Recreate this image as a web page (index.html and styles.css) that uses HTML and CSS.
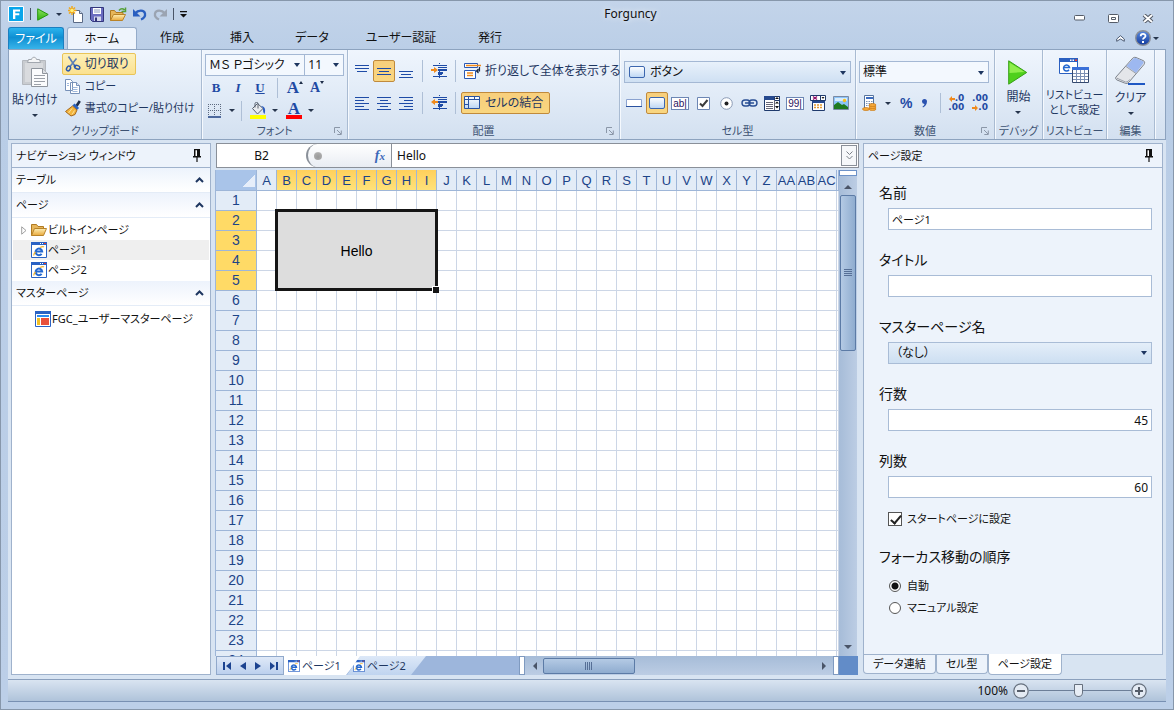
FILE: index.html
```html
<!DOCTYPE html>
<html lang="ja">
<head>
<meta charset="utf-8">
<title>Forguncy</title>
<link rel="stylesheet" href="styles.css">
</head>
<body>
<svg class="defs" aria-hidden="true">
  <defs>
    <linearGradient id="gGreen" x1="0" y1="0" x2="0" y2="1"><stop offset="0" stop-color="#8be060"/><stop offset="1" stop-color="#2fb40c"/></linearGradient>
    <linearGradient id="gFolder" x1="0" y1="0" x2="0" y2="1"><stop offset="0" stop-color="#fdeeb4"/><stop offset="1" stop-color="#e9a93c"/></linearGradient>
    <linearGradient id="gBtn" x1="0" y1="0" x2="0" y2="1"><stop offset="0" stop-color="#fff"/><stop offset="1" stop-color="#bcd6f4"/></linearGradient>
    <linearGradient id="gHelp" x1="0" y1="0" x2="0" y2="1"><stop offset="0" stop-color="#5a8ae0"/><stop offset="1" stop-color="#123a9c"/></linearGradient>
    <symbol id="page" viewBox="0 0 16 16"><path fill="#fff" stroke="#2a62c4" d="M.5.5h15v15H.5z"/><path fill="#2a62c4" d="M0 0h16v3H0z"/><path fill="#fff" d="M9 1h1v1H9zM11 1h1v1h-1z"/><path fill="#f03c28" d="M13 1h2v1h-2z"/><path d="M4.800 9.500h6.400A3.300 3.300 0 1 0 10.600 11.800" fill="none" stroke="#2468d0" stroke-width="2"/><path d="M3 13.500C2.500 12.500 3.500 11 4.500 10M9 5.500c2-1 3.500-1 4-.5" fill="none" stroke="#f3b32c" stroke-width="1.200"/></symbol>
    <symbol id="pin" viewBox="0 0 8 13"><path fill="#111" d="M1 0h6v7h1v1.500H4.600V13H3.400V8.500H0V7h1z"/><path fill="#fff" d="M2.500 1.200H4V7H2.500z"/></symbol>
    <symbol id="up" viewBox="0 0 9 6"><path d="M1 5l3.500-3.500L8 5" fill="none" stroke="#1e3660" stroke-width="2"/></symbol>
    <symbol id="launch" viewBox="0 0 8 8"><path d="M.5 6V.5H6M3 3l4 4M7.300 3.500v4h-4" fill="none" stroke="#8b97a8"/></symbol>
    <symbol id="folder" viewBox="0 0 16 14"><path fill="#e7b65a" stroke="#b07a20" d="M.5 12.500V1.500h5l1.500 2h5.500v3"/><path fill="url(#gFolder)" stroke="#b98328" d="M.5 12.500l3-7h12l-3 7z"/></symbol>
    <symbol id="btncell" viewBox="0 0 16 12"><rect x=".5" y=".5" width="15" height="11" rx="1.500" fill="url(#gBtn)" stroke="#3c66ae"/></symbol>
  </defs>
</svg>

<div class="window">
  <header class="titlebar">
    <div class="quick">
      <svg width="16" height="16" viewBox="0 0 16 16"><path fill="#09a5ea" stroke="#fff" d="M.5.5h15v15H.5z"/><path fill="#fff" d="M5 3.500h7v2H7.300v1.800h4v2h-4v3.700H5z"/></svg>
      <i class="vbar"></i>
      <button class="ic" aria-label="実行"><svg width="12" height="13" viewBox="0 0 12 13"><path fill="url(#gGreen)" stroke="#25960c" d="M.7.800l10.500 5.700L.7 12.200z"/></svg></button>
      <button class="ic drop" aria-label="実行オプション"></button>
      <button class="ic" aria-label="新規"><svg width="16" height="17" viewBox="0 0 16 17"><path fill="#fff" stroke="#5a6a86" d="M5.500 4.500h6l3 3v9h-9z"/><path fill="#cdd8ea" stroke="#5a6a86" d="M11.500 4.500v3h3"/><g stroke="#f0a81c" stroke-width="1.500"><path d="M4 0v9M-.5 4.500h9M1 1.500l6 6M7 1.500l-6 6"/></g><circle cx="4" cy="4.500" r="1.800" fill="#fff07a"/></svg></button>
      <button class="ic" aria-label="保存"><svg width="14" height="15" viewBox="0 0 14 15"><path fill="#6a6cc0" stroke="#33367c" d="M.5.500h13v14h-11l-2-2z"/><path fill="#fff" d="M3 1h8v6H3z"/><path stroke="#8c9cc4" d="M4 3h6M4 5h6"/><path fill="#d4d8ec" d="M4 9.500h7V14H4z"/><path fill="#33367c" d="M5 10.500h2V14H5z"/></svg></button>
      <button class="ic" aria-label="開く"><svg width="17" height="15" viewBox="0 0 17 15"><path fill="#e7b65a" stroke="#b07a20" d="M.5 13.500v-10h4l1.500 2h7v3"/><path fill="url(#gFolder)" stroke="#b98328" d="M.5 13.500l3-6h12l-3 6z"/><path d="M9 3.500c2-2.500 4-2 5.500-.5M15.500 .500v4h-4" fill="none" stroke="#56a038" stroke-width="1.500"/></svg></button>
      <button class="ic" aria-label="元に戻す"><svg width="14" height="13" viewBox="0 0 14 13"><path d="M2 5.500C5 2 11 1.500 12 5.500c.5 3-1.500 5-4 6" fill="none" stroke="#2a5fc0" stroke-width="2.300"/><path fill="#2a5fc0" d="M0 1v7.500h7.500z"/></svg></button>
      <button class="ic" aria-label="やり直し"><svg width="14" height="13" viewBox="0 0 14 13"><path d="M12 5.500C9 2 3 1.500 2 5.500c-.5 3 1.500 5 4 6" fill="none" stroke="#9ba4b2" stroke-width="2.300"/><path fill="#9ba4b2" d="M14 1v7.500H6.500z"/></svg></button>
      <i class="vbar"></i>
      <button class="ic" aria-label="カスタマイズ"><svg width="7" height="7" viewBox="0 0 7 7"><path d="M0 0h7v1.200H0zM0 3h7L3.500 6.500z" fill="#111"/></svg></button>
    </div>
    <h1 class="title">Forguncy</h1>
    <div class="sysbtns">
      <button class="ic" aria-label="最小化"><svg width="11" height="6" viewBox="0 0 11 6"><rect x=".5" y=".5" width="10" height="4.500" rx="1" fill="#fff" stroke="#555c68"/></svg></button>
      <button class="ic" aria-label="元のサイズに戻す"><svg width="11" height="9" viewBox="0 0 11 9"><rect x=".5" y=".5" width="10" height="8" rx="1" fill="#fff" stroke="#555c68"/><path fill="#fff" stroke="#555c68" d="M3.500 3.500h4v2h-4z"/></svg></button>
      <button class="ic" aria-label="閉じる"><svg width="12" height="9" viewBox="0 0 12 9"><path d="M2 1l8 7M10 1L2 8" stroke="#555c68" stroke-width="4"/><path d="M2 1l8 7M10 1L2 8" stroke="#fff" stroke-width="1.800"/></svg></button>
    </div>
  </header>

  <nav class="tabs">
    <button class="file">ファイル</button>
    <button class="tab on">ホーム</button>
    <button class="tab">作成</button>
    <button class="tab">挿入</button>
    <button class="tab">データ</button>
    <button class="tab wide">ユーザー認証</button>
    <button class="tab">発行</button>
    <span class="helpers">
      <button class="ic" aria-label="リボンの最小化"><svg width="9" height="7" viewBox="0 0 9 7"><path d="M.7 4L4.500.700 8.300 4v2.300L4.500 4 .7 6.300z" fill="#fff" stroke="#4e5c74"/></svg></button>
      <button class="ic" aria-label="ヘルプ"><svg width="16" height="16" viewBox="0 0 16 16"><circle cx="8" cy="8" r="7.300" fill="url(#gHelp)" stroke="#8a8f98" stroke-width="1.400"/><path d="M5.700 6.200c0-3 4.800-3 4.800-.2C10.500 7.700 8 7.800 8 9.600" fill="none" stroke="#fff" stroke-width="1.800"/><path fill="#fff" d="M7 11h2v2H7z"/></svg></button>
      <i class="caret"></i>
    </span>
  </nav>

  <div class="ribbon">
    <section class="group g-clip">
      <div class="gbody">
        <button class="big paste"><svg width="28" height="32" viewBox="0 0 28 32"><path fill="#c9ccd0" stroke="#b4b8be" d="M1.500 4.500h23v24h-23z"/><path fill="#d9dbde" d="M4 7h18v19H4z"/><path fill="#f4f5f6" stroke="#a2a7ae" d="M6.500 6.500l1-3h3c.5-3 4.500-3 5 0h3l1 3z"/><path fill="#fbfcfd" stroke="#8f959d" d="M10.500 12.500h11l5 5v13h-16z"/><path fill="#dde0e4" stroke="#8f959d" d="M21.500 12.500v5h5"/><path stroke="#9ba0a8" d="M13 19.500h11M13 22.500h11M13 25.500h11M13 28.500h7"/></svg><span>貼り付け</span><i class="caret"></i></button>
        <div class="col">
          <button class="cmd hot"><svg width="16" height="16" viewBox="0 0 16 16"><path d="M3.500.500l6 9M11.500 2.500L5 10.500" stroke="#5d7fb4" stroke-width="1.600"/><path d="M9 9.500l2 1" stroke="#2a58ac" stroke-width="2"/><ellipse cx="3.500" cy="12.500" rx="1.800" ry="2.500" fill="none" stroke="#2a58ac" stroke-width="1.500" transform="rotate(30 3.500 12.500)"/><ellipse cx="12.200" cy="11.200" rx="2.700" ry="1.700" fill="none" stroke="#2a58ac" stroke-width="1.500" transform="rotate(20 12.200 11.200)"/></svg>切り取り</button>
          <button class="cmd small"><svg width="16" height="15" viewBox="0 0 16 15"><path fill="#fff" stroke="#7791b8" d="M.5.500h5l2 2v9h-7zM5.500 3.500h6l3 3v8h-9z"/><path stroke="#7791b8" fill="#dbe6f6" d="M11.500 3.500v3h3"/><path stroke="#9fb8dc" d="M7.500 8.500h5M7.500 10.500h5M7.500 12.500h5M2 4.500h2M2 6.500h2"/></svg>コピー</button>
          <button class="cmd small"><svg width="16" height="17" viewBox="0 0 16 17"><path d="M14.800 1l-3.300 5" stroke="#1f2e4a" stroke-width="2.600"/><path d="M8.500 4.500l4.500 4.500" stroke="#2b63c0" stroke-width="3"/><path fill="#f4b53c" stroke="#a5681c" d="M7.500 6L12 10l-2 4.500-4 1.500-5.500-4.500z"/><path d="M7 8.500l-3.500 4.500M9.500 10.500l-2.500 4" stroke="#fbe29a"/></svg>書式のコピー/貼り付け</button>
        </div>
      </div>
      <h2>クリップボード</h2>
    </section>

    <section class="group g-font">
      <div class="gbody col">
        <div class="row joined">
          <span class="combo fontname"><select aria-label="フォント名"><option>ＭＳ Ｐゴシック</option></select></span>
          <span class="combo fontsize"><select aria-label="フォント サイズ"><option>11</option></select></span>
        </div>
        <div class="row r20">
          <button class="glyph b">B</button><button class="glyph i">I</button><button class="glyph u">U</button><i class="sep"></i>
          <button class="glyph big-a" aria-label="拡大">A<i class="tri-up"></i></button><button class="glyph small-a" aria-label="縮小">A<i class="tri-dn"></i></button>
        </div>
        <div class="row r20">
          <button class="ic" aria-label="罫線"><svg width="14" height="14" viewBox="0 0 14 14"><path d="M.5 0v12M12.500 0v12M6.500 0v12M0 .500h13M0 6.500h13" stroke="#5d6a80" stroke-dasharray="1 1"/><path stroke="#1e3f80" d="M0 13h13" stroke-width="1.500"/></svg></button><i class="caret"></i><i class="sep"></i>
          <button class="ic" aria-label="塗りつぶし"><svg width="17" height="17" viewBox="0 0 17 17"><path fill="#e8ebef" stroke="#58616f" d="M2.500 6.500l5-5 5.500 5-5.500 5.500z"/><path d="M5 5.500V1.500c0-1.500 3-1.500 3 0v5" fill="none" stroke="#58616f"/><path fill="#2a5cc0" d="M11 4c4 0 5 4 3.500 8-1.500-1-1.500-4-1.500-6z"/><path fill="#ff0" d="M0 13h16v4H0z"/></svg></button><i class="caret"></i>
          <button class="glyph color-a" aria-label="文字色">A</button><i class="caret"></i>
        </div>
      </div>
      <h2>フォント</h2><svg class="launch" width="8" height="8"><use href="#launch"/></svg>
    </section>

    <section class="group g-align">
      <div class="gbody alignbody">
        <div class="grid3">
          <button class="sq" aria-label="上揃え"><svg width="14" height="13"><path stroke="#1e4ba6" d="M0 .500h14M0 3.500h14M2 6.500h10"/></svg></button>
          <button class="sq sel" aria-label="上下中央"><svg width="14" height="9"><path stroke="#1e4ba6" d="M0 1.500h14M2 4.500h10M0 7.500h14"/></svg></button>
          <button class="sq" aria-label="下揃え"><svg width="14" height="13"><path stroke="#1e4ba6" d="M0 6.500h14M2 9.500h10M0 12.500h14"/></svg></button>
          <button class="sq" aria-label="左揃え"><svg width="14" height="13"><path stroke="#1e4ba6" d="M0 .500h14M0 3.500h9M0 6.500h14M0 9.500h9M0 12.500h14"/></svg></button>
          <button class="sq" aria-label="中央揃え"><svg width="14" height="13"><path stroke="#1e4ba6" d="M0 .500h14M3 3.500h8M0 6.500h14M3 9.500h8M0 12.500h14"/></svg></button>
          <button class="sq" aria-label="右揃え"><svg width="14" height="13"><path stroke="#1e4ba6" d="M0 .500h14M5 3.500h9M0 6.500h14M5 9.500h9M0 12.500h14"/></svg></button>
        </div>
        <i class="sep tall"></i>
        <div class="grid1">
          <button class="sq" aria-label="インデントを増やす"><svg width="17" height="16"><path stroke="#1e4ba6" d="M2 2.500h14M7 4.500h9M7 11.500h4M2 13.500h14"/><path stroke="#1e4ba6" stroke-width="2" d="M7 7h9M7 10h5"/><path stroke="#1e4ba6" stroke-dasharray="1 1" d="M8.500 0v16"/><path fill="#f08a1c" d="M0 6h3V4l4 3-4 3V8H0z"/></svg></button>
          <button class="sq" aria-label="インデントを減らす"><svg width="17" height="16"><path stroke="#1e4ba6" d="M2 2.500h14M7 4.500h9M7 11.500h4M2 13.500h14"/><path stroke="#1e4ba6" stroke-width="2" d="M7 7h9M7 10h5"/><path stroke="#1e4ba6" stroke-dasharray="1 1" d="M8.500 0v16"/><path fill="#f08a1c" d="M7 6H4V4L0 7l4 3V8h3z"/></svg></button>
        </div>
        <i class="sep tall"></i>
        <div class="grid1 left">
          <button class="cmd"><svg width="17" height="16" viewBox="0 0 17 16"><path fill="#fff" stroke="#2a58b4" d="M.5.500h13v4H.500zM.5 7.500h11v8H.500z"/><path stroke="#f08a1c" d="M2 2.500h15M3 10h6M3 12.500h6" stroke-width="1.300"/><path d="M15.500 4v4h-3M14.500 6l-2 2 2 2" fill="none" stroke="#1d2c48" stroke-width="1.200"/></svg>折り返して全体を表示する</button>
          <button class="cmd merge"><svg width="17" height="14" viewBox="0 0 17 14"><path fill="url(#gBtn)" stroke="#2a52a0" d="M.5.500h15v12H.500z"/><path stroke="#2a52a0" d="M0 3.500h16M4.500 0v13M10.500 0v3.500M0 8.500h4"/></svg>セルの結合</button>
        </div>
      </div>
      <h2>配置</h2><svg class="launch" width="8" height="8"><use href="#launch"/></svg>
    </section>

    <section class="group g-cell">
      <div class="gbody col">
        <div class="combo celltype"><svg width="16" height="12"><use href="#btncell"/></svg><select aria-label="セル型"><option>ボタン</option></select></div>
        <div class="row icons">
          <button class="sq" aria-label="標準"><svg width="16" height="8" viewBox="0 0 16 8"><path fill="#fff" stroke="#8aa2d0" d="M.5.500h15v7H.500z"/><path stroke="#2a52a0" d="M0 7.500h16"/></svg></button>
          <button class="sq sel" aria-label="ボタン"><svg width="16" height="12"><use href="#btncell"/></svg></button>
          <button class="sq mini" aria-label="テキストボックス"><span class="box">ab|</span></button>
          <button class="sq" aria-label="チェックボックス"><svg width="13" height="13" viewBox="0 0 13 13"><path fill="#fff" stroke="#6c86b4" d="M.5.500h12v12H.500z"/><path d="M3 6.500L5.500 9l5-6" fill="none" stroke="#3c3c3c" stroke-width="2"/></svg></button>
          <button class="sq" aria-label="ラジオボタン"><svg width="13" height="13" viewBox="0 0 13 13"><circle cx="6.500" cy="6.500" r="5.800" fill="#fff" stroke="#8a9ab4"/><circle cx="6.500" cy="6.500" r="2" fill="#222"/></svg></button>
          <button class="sq" aria-label="リンク"><svg width="17" height="8" viewBox="0 0 17 8"><rect x="1" y="1" width="8" height="6" rx="3" fill="none" stroke="#2a4f94" stroke-width="1.400"/><rect x="8" y="1" width="8" height="6" rx="3" fill="none" stroke="#2a4f94" stroke-width="1.400"/><path stroke="#2a4f94" stroke-width="1.500" d="M4 4h9"/></svg></button>
          <button class="sq" aria-label="リストボックス"><svg width="16" height="15" viewBox="0 0 16 15"><path fill="#fff" stroke="#1f3a6c" d="M.5.500h15v14H.500z"/><path fill="#26498e" d="M0 0h16v4H0z"/><path fill="#fff" stroke="#1f3a6c" d="M10.500.500h5v4h-5z"/><path stroke="#667" d="M2 6.500h7M2 8.500h7M2 10.500h7M2 12.500h7M10.500 4v10"/><path fill="#111" d="M13 1l2 2h-4zM13 5.500l2 2h-4zM11 10h4l-2 2.500z"/></svg></button>
          <button class="sq mini" aria-label="数値"><span class="box">99|</span></button>
          <button class="sq" aria-label="日付"><svg width="16" height="16" viewBox="0 0 16 16"><path fill="#fff" stroke="#1f3a6c" d="M.5.500h15v5H.500zM2.500 6.500h12v9h-12z"/><path d="M3 1.500l4 3M7 1.500l-4 3" stroke="#90106c" stroke-width="1.300"/><path stroke="#1f3a6c" d="M10.500 0v5"/><path fill="#222" d="M11.500 2h3L13 4z"/><path fill="#26498e" d="M2 6h13v2H2z"/><path stroke="#e39a30" stroke-dasharray="2 1" d="M4 10h9M4 12.500h9" stroke-width="1.500"/></svg></button>
          <button class="sq" aria-label="画像"><svg width="16" height="14" viewBox="0 0 16 14"><path fill="#8cc4f8" stroke="#7a8aa4" d="M.5.500h15v13H.500z"/><path fill="#d8ecfc" d="M2 2h12v3H2z"/><path fill="#1f7a1f" d="M1 13V9l4-3 4 3 2-1 4 3v2z"/><circle cx="11.500" cy="4.500" r="1.700" fill="#f4c020"/></svg></button>
        </div>
      </div>
      <h2>セル型</h2>
    </section>

    <section class="group g-num">
      <div class="gbody col">
        <div class="combo numfmt"><select aria-label="表示形式"><option>標準</option></select></div>
        <div class="row icons num">
          <button class="ic" aria-label="通貨"><svg width="15" height="16" viewBox="0 0 15 16"><path fill="#fff" stroke="#56749e" d="M2.500.500h9v13h-9z"/><path fill="#3c6cc0" d="M4 2h7v2H4z"/><path stroke="#7d93b4" stroke-dasharray="1.500 1" d="M4 6.500h7M4 8.500h7M4 10.500h4"/><g fill="#f6a93a" stroke="#c87812" stroke-width=".7"><ellipse cx="4" cy="14" rx="3.500" ry="1.500"/><ellipse cx="10.500" cy="14" rx="3.500" ry="1.500"/><ellipse cx="10.500" cy="12" rx="3.500" ry="1.500"/><ellipse cx="10.500" cy="10" rx="3.500" ry="1.500"/></g></svg></button><i class="caret"></i>
          <button class="glyph pct">%</button>
          <button class="ic comma" aria-label="桁区切り"><svg width="6" height="9" viewBox="0 0 6 9"><path fill="#2a52b0" d="M0 2.500a2.500 2.500 0 0 1 5 0C5 5.500 3 7.500 1 8.500l-.5-1C2 6.500 2.500 5.500 2.400 5A2.500 2.500 0 0 1 0 2.500z"/></svg></button><i class="sep"></i>
          <button class="dec"><span><svg width="6" height="6" viewBox="0 0 6 6"><path fill="#f08a1c" d="M6 2H3V0L0 3l3 3V4h3z"/></svg>.0</span><span>.00</span></button>
          <button class="dec"><span>.00</span><span><svg width="6" height="6" viewBox="0 0 6 6"><path fill="#f08a1c" d="M0 2h3V0l3 3-3 3V4H0z"/></svg>.0</span></button>
        </div>
      </div>
      <h2>数値</h2><svg class="launch" width="8" height="8"><use href="#launch"/></svg>
    </section>

    <section class="group g-debug">
      <div class="gbody center"><button class="big"><svg width="20" height="25" viewBox="0 0 20 25"><path fill="#4fd01c" stroke="#38a018" d="M.7.800l18 11.700L.7 24.200z"/><path fill="#8fee4c" d="M1.500 2.500l15 9.500-15 1z"/></svg><span>開始</span><i class="caret"></i></button></div>
      <h2>デバッグ</h2>
    </section>
    <section class="group g-list">
      <div class="gbody center"><button class="big two"><svg width="31" height="25" viewBox="0 0 31 25"><path fill="#fff" stroke="#2a5fc0" d="M.5.500h18v15H.500z"/><path fill="#2a5fc0" d="M0 0h19v4H0z"/><path fill="#fff" d="M11 1.500h1.500V3H11zM13.500 1.500H15V3h-1.500z"/><path fill="#f04030" d="M16 1.500h2V3h-2z"/><path d="M4.500 9.500h6A3 3 0 1 0 10 11.800" fill="none" stroke="#2468d0" stroke-width="1.500"/><path fill="#fff" stroke="#34496e" d="M13.500 9.500h16v15h-16z"/><path fill="#3a70d8" d="M13 9h17v3H13z"/><path stroke="#7c90b4" d="M14 15.500h15M14 18.500h15M14 21.500h15M17.500 12v12M21.500 12v12M25.500 12v12"/></svg><span>リストビュー<br>として設定</span></button></div>
      <h2>リストビュー</h2>
    </section>
    <section class="group g-edit">
      <div class="gbody center"><button class="big paste"><svg width="31" height="30" viewBox="0 0 31 30"><path stroke="#1f58c4" stroke-width="2" d="M13 28h17"/><path fill="#e4e6ea" stroke="#7d838c" d="M1 21L17 3c1-1.500 2-2 4-1.500l7 3c2 1 2 2 1 4L14 26c-1 1.500-3 2-4.500 1L2 24c-1.500-1-2-2-1-3z"/><path fill="#9db8f0" d="M11.500 10L18 2.700c1-.9 2-1 3-.6l6.500 2.800c1.300.7 1.400 1.600.7 2.700L21 17z"/><path d="M11 10.500l10 7M1.500 22l9 4c2 0 3-1 4-2.500" fill="none" stroke="#9aa0aa"/></svg><span>クリア</span><i class="caret"></i></button></div>
      <h2>編集</h2>
    </section>
  </div>

  <main class="work">
    <aside class="panel nav">
      <div class="phead">ナビゲーション ウィンドウ<svg width="8" height="13"><use href="#pin"/></svg></div>
      <button class="sect">テーブル<svg width="9" height="6"><use href="#up"/></svg></button>
      <button class="sect">ページ<svg width="9" height="6"><use href="#up"/></svg></button>
      <ul class="tree">
        <li><svg class="exp" width="6" height="9" viewBox="0 0 6 9"><path d="M.7.800L5 4.500.7 8.200z" fill="#fff" stroke="#a0a0a0"/></svg><svg width="16" height="14"><use href="#folder"/></svg>ビルトインページ</li>
        <li class="cur"><svg width="16" height="16"><use href="#page"/></svg>ページ1</li>
        <li><svg width="16" height="16"><use href="#page"/></svg>ページ2</li>
      </ul>
      <button class="sect">マスターページ<svg width="9" height="6"><use href="#up"/></svg></button>
      <ul class="tree master">
        <li><svg width="16" height="16" viewBox="0 0 16 16"><path fill="#fff" stroke="#2a62c4" d="M.5.500h15v15H.500z"/><path fill="#2a62c4" d="M0 0h16v3H0z"/><path fill="#2a8af0" d="M2 4h12v2H2z"/><path fill="#f2c024" d="M2 7h3v7H2z"/><path fill="#e8503c" d="M6 7h8v7H6z"/></svg>FGC_ユーザーマスターページ</li>
      </ul>
    </aside>

    <section class="sheet">
      <div class="fbar">
        <div class="namebox">B2</div>
        <div class="capsule"><i class="knob"></i><span class="fx">f<small>x</small></span></div>
        <input aria-label="数式バー" value="Hello">
        <button class="expand" aria-label="展開"><svg width="7" height="9" viewBox="0 0 7 9"><path d="M.5.500l3 3 3-3M.5 5l3 3 3-3" fill="none" stroke="#7b8088"/></svg></button>
      </div>
      <div class="gridarea">
        <div class="cells"><table id="grid"></table></div>
        <div class="vscroll">
          <i class="split"></i><i class="tri up"></i>
          <div class="thumb"><i class="grip"></i></div>
          <i class="tri down"></i>
        </div>
      </div>
      <div class="pagebar">
        <div class="pnav">
          <button class="ic" aria-label="先頭"><svg width="8" height="8"><path fill="#1c4390" d="M0 0h2v8H0zM8 0v8L3 4z"/></svg></button>
          <button class="ic" aria-label="前へ"><svg width="6" height="8"><path fill="#1c4390" d="M6 0v8L0 4z"/></svg></button>
          <button class="ic" aria-label="次へ"><svg width="6" height="8"><path fill="#1c4390" d="M0 0v8l6-4z"/></svg></button>
          <button class="ic" aria-label="最後"><svg width="8" height="8"><path fill="#1c4390" d="M6 0h2v8H6zM0 0v8l5-4z"/></svg></button>
        </div>
        <button class="ptab on"><svg width="12" height="12"><use href="#page"/></svg>ページ1</button>
        <button class="ptab"><svg width="12" height="12"><use href="#page"/></svg>ページ2</button>
        <i class="hsplit first"></i>
        <div class="hscroll">
          <i class="tri left"></i>
          <div class="thumb"><i class="grip"></i></div>
          <i class="tri right"></i>
        </div>
        <i class="hsplit"></i>
        <i class="corner"></i>
      </div>
    </section>

    <aside class="props">
      <div class="panel pbody">
        <div class="phead">ページ設定<svg width="8" height="13"><use href="#pin"/></svg></div>
        <form class="form">
          <div class="field"><label for="f1">名前</label><input id="f1" type="text" value="ページ1"></div>
          <div class="field"><label for="f2">タイトル</label><input id="f2" type="text"></div>
          <div class="field"><label for="f3">マスターページ名</label><span class="combo mpage"><select id="f3"><option>（なし）</option></select></span></div>
          <div class="field"><label for="f4">行数</label><input id="f4" class="n" type="text" value="45"></div>
          <div class="field"><label for="f5">列数</label><input id="f5" class="n" type="text" value="60"></div>
          <label class="opt start"><input type="checkbox" checked>スタートページに設定</label>
          <fieldset>
            <legend>フォーカス移動の順序</legend>
            <label class="opt"><input type="radio" name="focus" checked>自動</label>
            <label class="opt"><input type="radio" name="focus">マニュアル設定</label>
          </fieldset>
        </form>
      </div>
      <div class="ptabs"><button>データ連結</button><button>セル型</button><button class="on">ページ設定</button></div>
    </aside>
  </main>

  <footer class="status">
    <span>100%</span>
    <button class="ic" aria-label="縮小"><svg width="16" height="16" viewBox="0 0 16 16"><circle cx="8" cy="8" r="7.200" fill="#e4ebf4" stroke="#66707e" stroke-width="1.200"/><path fill="#555d69" d="M4 7h8v2H4z"/></svg></button>
    <input type="range" min="0" max="100" value="48" aria-label="ズーム">
    <button class="ic" aria-label="拡大"><svg width="16" height="16" viewBox="0 0 16 16"><circle cx="8" cy="8" r="7.200" fill="#e4ebf4" stroke="#66707e" stroke-width="1.200"/><path fill="#555d69" d="M4 7h3V4h2v3h3v2H9v3H7V9H4z"/></svg></button>
  </footer>
</div>
<script src="grid.js"></script>
</body>
</html>
```
FILE: styles.css
```css
* { box-sizing: border-box; }
body {
  margin: 0;
  font: 12px/16px "Noto Sans", "Noto Sans CJK JP", sans-serif;
  font-feature-settings: "palt";
  color: #111;
}
button, input, select { font: inherit; font-feature-settings: inherit; color: inherit; margin: 0; }
button { border: 0; background: none; padding: 0; white-space: nowrap; }
svg { display: block; flex: none; fill: none; }
h1, h2 { font: inherit; margin: 0; }
i { font-style: normal; flex: none; }
.defs { position: absolute; width: 0; height: 0; }
.ic { display: flex; align-items: center; justify-content: center; }

.window {
  display: flex;
  flex-direction: column;
  height: 100vh;
  min-height: 560px;
  padding: 0 7px 7px;
  border: 1px solid #8797ab;
  background: linear-gradient(#c3d4ea, #b9cde6 60px, #bccfe8);
  overflow: hidden;
}

/* Title bar */
.titlebar { display: grid; grid-template-columns: auto 1fr auto; align-items: center; height: 26px; flex: none; }
.quick { display: flex; align-items: center; gap: 6px; }
.quick .vbar { width: 1px; height: 12px; background: #4a5568; }
.quick .drop { width: 7px; height: 14px; }
.drop::after, .caret { content: ""; width: 0; height: 0; border: 3px solid transparent; border-top: 3px solid #26354d; border-bottom: 0; }
.title { font-size: 12px; text-align: center; text-shadow: 0 0 6px #fff; }
.sysbtns { display: flex; justify-content: flex-end; gap: 23px; padding: 8px 12px 0 0; }

/* Ribbon tabs */
.tabs { display: flex; height: 22px; flex: none; line-height: 20px; }
.file { width: 56px; color: #fff; background: linear-gradient(#2bb4ee, #0f8fd2 45%, #38b4ea); border: 1px solid #1c7fc0; border-bottom: 0; border-radius: 3px 3px 0 0; }
.tab { min-width: 70px; }
.tab.on { margin-left: 3px; background: #eef4fc; border: 1px solid #94abc9; border-bottom: 0; border-radius: 3px 3px 0 0; }
.tab.wide { min-width: 108px; }
.helpers { margin-left: auto; display: flex; align-items: center; gap: 10px; padding-right: 7px; }
.helpers .caret { margin-left: -8px; }

/* Ribbon */
.ribbon { display: flex; flex: none; height: 91px; border: 1px solid #8da3bf; background: linear-gradient(#eff5fd, #e1ebf7 50%, #d3e0f0); color: #1e3660; overflow: hidden; }
.group { position: relative; display: flex; flex-direction: column; flex: none; border-right: 1px solid #a9bbd2; box-shadow: 1px 0 #f5f9fe; padding: 3px 3px 0; }
.group h2 { text-align: center; font-size: 11px; line-height: 16px; color: #3d5272; white-space: nowrap; }
.gbody { display: flex; height: 70px; flex: none; }
.launch { position: absolute; right: 5px; bottom: 4px; }
.col { display: flex; flex-direction: column; }
.row { display: flex; align-items: center; }
.center { justify-content: center; }
.big { display: flex; flex-direction: column; align-items: center; gap: 4px; line-height: 15px; padding-top: 7px; }
.big .caret { margin-top: 3px; }
.big.paste { padding-top: 3px; }
.big.two { font-size: 11px; padding-top: 5px; }
.cmd { display: flex; align-items: center; gap: 4px; height: 22px; padding: 0 6px 0 2px; align-self: flex-start; border: 1px solid transparent; border-radius: 2px; }
.cmd.small { font-size: 11px; }
.hot { background: linear-gradient(#fdf0b8, #fbe190); border-color: #e9c458; }
.g-clip { width: 193px; }
.g-clip .gbody { gap: 4px; }
.g-clip .big { width: 48px; }
.g-font { width: 146px; }
.g-align { width: 272px; }
.g-cell { width: 236px; }
.g-num { width: 139px; }
.g-debug { width: 48px; padding-left: 0; padding-right: 0; }
.g-list { width: 64px; padding-left: 0; padding-right: 0; }
.g-edit { width: 48px; padding-left: 0; padding-right: 0; }

.combo { position: relative; display: flex; align-items: center; height: 22px; border: 1px solid #a4b8d4; background: #f3f8fe; }
.combo select { appearance: none; flex: 1; min-width: 0; height: 20px; line-height: 20px; padding: 0 16px 0 3px; border: 0; border-radius: 0; background: none; color: #111; }
.combo::after { content: ""; position: absolute; right: 4px; top: 8px; border: 3px solid transparent; border-top: 4px solid #1e3660; border-bottom: 0; pointer-events: none; }
.joined .combo + .combo { border-left: 0; }
.joined { padding-top: 1px; }
.fontname { width: 101px; }
.fontsize { width: 39px; }
.r20 { height: 23px; }
.sep { width: 1px; height: 20px; background: #aebfd6; }
.glyph { display: flex; align-items: center; justify-content: center; width: 22px; height: 20px; font: bold 13px/18px "Liberation Serif", serif; color: #1f4aa4; }
.i { font-style: italic; }
.u { text-decoration: underline; }
.r20 .sep { margin: 0 6px; }
.big-a { font-size: 17px; }
.small-a { font-size: 14px; }
.glyph i { border: 2px solid transparent; margin-bottom: 10px; }
.tri-up { border-bottom: 3px solid #1d2c48 !important; border-top: 0 !important; }
.tri-dn { border-top: 3px solid #1d2c48 !important; border-bottom: 0 !important; }
.r20 .ic { width: 20px; }
.r20 .ic + .caret { margin-left: 4px; }
.color-a { font-size: 17px; line-height: 14px; height: 17px; width: 16px; margin: 0 6px 0 8px; border-bottom: 4px solid #f00; }

.alignbody { padding-top: 7px; }
.grid3 { display: grid; grid-template-columns: repeat(3, 22px); grid-auto-rows: 22px; row-gap: 10px; }
.grid1 { display: grid; grid-auto-rows: 22px; row-gap: 10px; width: 22px; }
.grid1.left { width: auto; justify-items: start; }
.sq { display: flex; align-items: center; justify-content: center; width: 22px; height: 22px; border: 1px solid transparent; border-radius: 2px; }
.sq.sel, .merge { background: linear-gradient(#f8cf7c, #f9d680); border-color: #c08a3c; }
.sep.tall { height: 54px; margin: 0 5px; background: linear-gradient(#aebfd6 22px, transparent 22px, transparent 32px, #aebfd6 32px); }

.celltype { margin: 8px 1px 0; padding-left: 4px; background: linear-gradient(#e8f1fb, #cfe0f3); }
.celltype select { padding-left: 5px; }
.icons { height: 40px; justify-content: space-between; }
.mini .box { font: 10px/11px "Liberation Sans", sans-serif; color: #2a1460; background: #fff; border: 1px solid #6c86b4; padding: 0 1px; }
.numfmt { margin-top: 8px; width: 130px; }
.g-num .icons { width: 130px; padding: 0 1px 0 3px; }
.pct { width: 16px; font: bold 14px/18px "Liberation Sans", sans-serif; }
.icons .sep { margin-left: 4px; }
.dec { display: flex; flex-direction: column; font: bold 9px/9px "DejaVu Sans", sans-serif; color: #1f4aa4; }
.dec span { display: flex; align-items: center; justify-content: flex-end; }
.celltype::after, .numfmt::after { top: 9px; }

/* Work area */
.work { display: flex; flex: 1; min-height: 0; gap: 4px; padding: 3px 3px 4px; background: #d8e4f2; border-bottom: 1px solid #8ba0bd; }
.panel { background: #fff; border: 1px solid #9fb2cc; }
.phead { display: flex; align-items: center; justify-content: space-between; height: 24px; padding: 0 9px 0 4px; background: #edf3fb; border-bottom: 1px solid #9fb2cc; flex: none; font-size: 11px; }
.nav { width: 200px; flex: none; overflow: hidden; font-size: 11px; }
.sect { display: flex; align-items: center; justify-content: space-between; width: 100%; height: 25px; padding: 0 6px 0 4px; background: linear-gradient(#edf3fc, #fff); border-bottom: 1px solid #e4ecf7; }
.tree { list-style: none; margin: 0; padding: 2px 1px 1px; }
.tree li { position: relative; display: flex; align-items: center; gap: 1px; height: 20px; padding-left: 18px; white-space: nowrap; }
.tree .exp { position: absolute; left: 8px; }
.tree .cur { background: #efefef; }
.tree.master { padding-top: 3px; }
.master li { padding-left: 22px; }

.sheet { display: flex; flex-direction: column; flex: 1; min-width: 0; gap: 2px; }
.fbar { display: flex; height: 25px; flex: none; border: 1px solid #8a9099; background: #fff; margin-left: 1px; }
.namebox { width: 89px; text-align: center; line-height: 23px; }
.capsule { display: flex; align-items: center; justify-content: space-between; width: 86px; padding: 0 6px; border: 1px solid #8a9099; border-width: 0 1px 0 2px; border-radius: 12px 0 0 12px; background: linear-gradient(#fff, #e9edf3); }
.knob { width: 8px; height: 8px; border-radius: 50%; background: radial-gradient(circle at 4px 5px, #999, #aaa 60%, #ddd); }
.fx { font: italic bold 14px/20px "Liberation Serif", serif; color: #3c68b8; }
.fx small { font-size: 11px; }
.fbar input { flex: 1; min-width: 0; border: 0; padding: 0 5px; background: none; }
.expand { display: flex; align-items: center; justify-content: center; width: 16px; margin: 1px; border: 1px solid #8a9099; background: #f6f8fa; }

.gridarea { display: flex; flex: 1; min-height: 0; border-left: 1px solid #9eb6d8; margin-bottom: -2px; }
.cells { flex: 1; min-width: 0; overflow: hidden; background: #fff; }
#grid { table-layout: fixed; width: 100%; border-collapse: separate; border-spacing: 0; font-family: "Liberation Sans", "Noto Sans CJK JP", sans-serif; }
#grid .rh { width: 41px; }
#grid .c { width: 20px; }
#grid th, #grid td { height: 20px; padding: 0; border-right: 1px solid #ccd6e6; border-bottom: 1px solid #ccd6e6; overflow: hidden; }
#grid th { font-weight: normal; font-size: 14px; line-height: 19px; color: #1c4488; background: #e3ecf7; border-color: #9eb6d8; }
#grid thead th { height: 21px; font-size: 13px; }
#grid th.hl { background: #ffda66; }
#grid thead th.hl { background: linear-gradient(#ffd05c, #ffe27a); }
#grid .all { background: linear-gradient(135deg, transparent 50%, #e6eefa 50%) 27px 5px / 12px 12px no-repeat, #a9c4e9; }
#grid .merged { position: relative; overflow: visible; background: #ddd; text-align: center; font-size: 14px; color: #000; }
.merged::before { content: ""; position: absolute; inset: -2px -2px -1px; border: 3px solid #151515; }
.merged::after { content: ""; position: absolute; right: -3px; bottom: -3px; width: 6px; height: 6px; background: #151515; border: 1px solid #fff; border-width: 1px 0 0 1px; }

.vscroll { display: flex; flex-direction: column; align-items: center; width: 18px; flex: none; margin-right: 2px; background: linear-gradient(90deg, #a6bcd8, #bccde4); }
.split { width: 18px; height: 6px; border: 1px solid #6d92c8; background: #fff; }
.tri { width: 0; height: 0; border: 4px solid transparent; }
.tri.up { border-bottom: 4px solid #4a5568; border-top: 0; margin: 9px 0 6px; }
.tri.down { border-top: 4px solid #4a5568; border-bottom: 0; margin: auto 0 7px; }
.thumb { display: flex; align-items: center; justify-content: center; border: 1px solid #5c7ba6; border-radius: 2px; }
.vscroll .thumb { width: 16px; height: 32%; background: linear-gradient(90deg, #b4cae4, #8faccf); }
.vscroll .grip { width: 8px; height: 8px; background: repeating-linear-gradient(#566f96 0 1px, transparent 1px 2px); }

.pagebar { display: flex; height: 19px; flex: none; margin: 0 1px 0 1px; background: #9db6dc; }
.pnav { display: flex; align-items: center; justify-content: space-around; width: 68px; padding: 0 1px; background: linear-gradient(#dfe9f7, #bcd0ee); border: 1px solid #91a9cb; }
.ptab { display: flex; align-items: center; gap: 2px; width: 79px; margin-left: -14px; padding-left: 6px; font-size: 11px; color: #1e3660; background: linear-gradient(#dce8f8, #c0d4ef); clip-path: polygon(13px 0, 100% 0, calc(100% - 15px) 100%, 0 100%); }
.ptab.on { width: 77px; margin: 0; padding-left: 4px; background: #fff; clip-path: polygon(0 0, 100% 0, calc(100% - 15px) 100%, 0 100%); }
.hsplit { width: 6px; background: #fff; border: 1px solid #7f9ac0; }
.hsplit.first { margin-left: auto; }
.hscroll { display: flex; align-items: center; flex: 0 0 48%; background: linear-gradient(#a6bcd8, #bccde4); }
.tri.left { border-right: 4px solid #4a5568; border-left: 0; margin: 0 6px 0 8px; }
.tri.right { border-left: 4px solid #4a5568; border-right: 0; margin: 0 7px 0 auto; }
.hscroll .thumb { width: 30%; height: 16px; background: linear-gradient(#b4cae4, #8faccf); }
.hscroll .grip { width: 8px; height: 8px; background: repeating-linear-gradient(90deg, #566f96 0 1px, transparent 1px 2px); }
.corner { width: 19px; background: #628cc8; }

/* Properties */
.props { display: flex; flex-direction: column; width: 300px; flex: none; }
.pbody { flex: 1; min-height: 0; background: #edf3fb; overflow: hidden; }
.form { padding: 15px 10px 0 15px; }
.field { margin-bottom: 20px; }
.field > label, legend { display: block; font-size: 14px; line-height: 20px; padding: 0; }
.field > input, .mpage { display: block; width: calc(100% - 9px); height: 22px; margin: 5px 0 0 9px; border: 1px solid #a9bcd6; background: #fff; padding: 0 3px; line-height: 16px; }
.field > input { font-size: 11px; }
.field > input.n { font-size: 12px; text-align: right; }
.mpage { display: flex; padding: 0 0 0 4px; background: linear-gradient(#e4eef9, #cddff2); }
.opt { display: flex; align-items: center; gap: 5px; height: 22px; padding-left: 9px; font-size: 11px; }
.opt.start { margin-top: -10px; }
.opt input { appearance: none; width: 14px; height: 14px; flex: none; border: 1px solid #555; background: #fff; }
.opt input[type=radio] { width: 12px; height: 12px; margin: 0 1px; border-radius: 50%; }
.opt input[type=radio]:checked { background: radial-gradient(circle, #111 3px, #fff 4px); }
.opt input[type=checkbox] { position: relative; }
.opt input[type=checkbox]:checked::after { content: ""; position: absolute; left: 4px; top: 0; width: 4px; height: 9px; border: solid #222; border-width: 0 2px 2px 0; transform: rotate(40deg); }
fieldset { border: 0; margin: 17px 0 0; padding: 0; }
legend { margin-bottom: 8px; }
.ptabs { display: flex; flex: none; height: 20px; font-size: 11px; }
.ptabs button { padding: 0 9px; line-height: 18px; background: #edf3fb; border: 1px solid #9fb2cc; border-top: 0; border-radius: 0 0 4px 4px; margin-bottom: 1px; }
.ptabs .on { background: #fff; margin: -1px 0 0; }

/* Status bar */
.status { display: flex; align-items: center; justify-content: flex-end; gap: 5px; height: 22px; flex: none; padding-right: 19px; background: linear-gradient(#d9e4f1, #afc3da); border-bottom: 1px solid #7890b2; }
.status input { appearance: none; width: 102px; height: 16px; margin: 0 -5px; background: linear-gradient(#6d7f98, #6d7f98) center / 100% 1px no-repeat; }
.status input::-webkit-slider-thumb { appearance: none; width: 9px; height: 13px; background: #e8eef6; border: 1px solid #66707e; border-radius: 1px 1px 5px 5px; }
```
FILE: grid.js
```js
// Builds the worksheet: column letters, row numbers and the merged range B2:I5.
const COLS = 29, ROWS = 24;
const name = n => n < 26 ? String.fromCharCode(65 + n) : "A" + String.fromCharCode(65 + n - 26);
let html = '<thead><tr><th class="rh all"></th>';
for (let c = 0; c < COLS; c++) {
  html += `<th class="c${c >= 1 && c <= 8 ? " hl" : ""}">${name(c)}</th>`;
}
html += "<th></th></tr></thead><tbody>";
for (let r = 1; r <= ROWS; r++) {
  const inRange = r >= 2 && r <= 5;
  html += `<tr><th class="rh${inRange ? " hl" : ""}">${r}</th>`;
  for (let c = 0; c <= COLS; c++) {
    if (inRange && c >= 1 && c <= 8) {
      if (r === 2 && c === 1) html += '<td class="merged" rowspan="4" colspan="8">Hello</td>';
      continue;
    }
    html += "<td></td>";
  }
  html += "</tr>";
}
document.getElementById("grid").innerHTML = html + "</tbody>";
```
